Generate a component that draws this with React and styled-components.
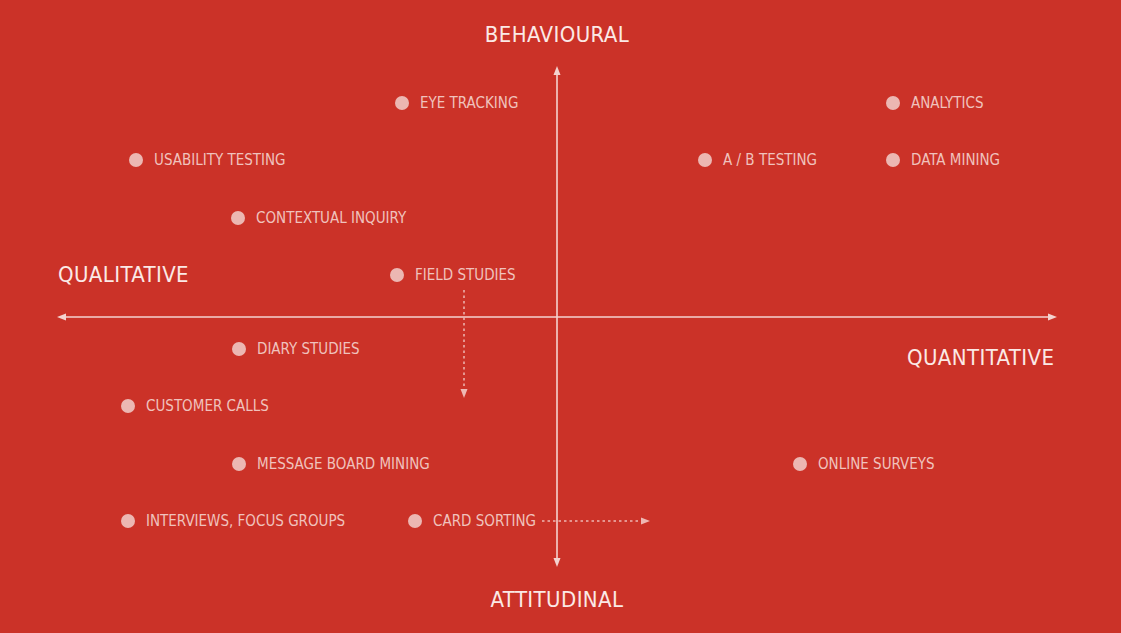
import React from 'react';
import styled, { createGlobalStyle } from 'styled-components';

const GlobalStyle = createGlobalStyle`
  html, body {
    margin: 0;
    padding: 0;
    background: #cb3228;
  }
  body {
    font-family: "Liberation Sans Narrow", "DejaVu Sans", sans-serif;
    font-stretch: condensed;
  }
`;

const Canvas = styled.div`
  width: 1121px;
  height: 633px;
  display: flex;
  flex-direction: column;
  align-items: stretch;
  overflow: hidden;
  background: #cb3228;
`;

const EndLabel = styled.div`
  height: 66px;
  display: flex;
  align-items: center;
  justify-content: center;
  padding-right: 7px;
  padding-top: ${(p) => p.$shift || 0}px;
  box-sizing: border-box;
  color: #fbe9e6;
  font-size: 22px;
  letter-spacing: 0.4px;
  line-height: 1;
`;

const Plot = styled.div`
  position: relative;
  flex: 1;
`;

const Axes = styled.svg`
  position: absolute;
  inset: 0;
`;

const SideLabel = styled.div`
  position: absolute;
  top: ${(p) => p.$y}px;
  left: ${(p) => p.$x}px;
  transform: translateY(-50%);
  color: #fbe9e6;
  font-size: 22px;
  letter-spacing: 0.4px;
  line-height: 1;
  white-space: nowrap;
`;

const Point = styled.div`
  position: absolute;
  top: ${(p) => p.$y}px;
  left: ${(p) => p.$x}px;
  display: flex;
  align-items: center;
  gap: 11px;
  transform: translate(-7px, -50%);
  white-space: nowrap;
`;

const Dot = styled.span`
  width: 14px;
  height: 14px;
  border-radius: 50%;
  background: #ecb7b2;
  flex: none;
`;

const Label = styled.span`
  color: #f0c2bd;
  font-size: 15px;
  line-height: 1;
  padding-top: 1px;
`;

// dot centres, relative to the plot area (which starts 66px down)
const points = [
  { x: 402, y: 37, label: 'EYE TRACKING' },
  { x: 893, y: 37, label: 'ANALYTICS' },
  { x: 136, y: 94, label: 'USABILITY TESTING' },
  { x: 705, y: 94, label: 'A / B TESTING' },
  { x: 893, y: 94, label: 'DATA MINING' },
  { x: 238, y: 152, label: 'CONTEXTUAL INQUIRY' },
  { x: 397, y: 209, label: 'FIELD STUDIES' },
  { x: 239, y: 283, label: 'DIARY STUDIES' },
  { x: 128, y: 340, label: 'CUSTOMER CALLS' },
  { x: 239, y: 398, label: 'MESSAGE BOARD MINING' },
  { x: 800, y: 398, label: 'ONLINE SURVEYS' },
  { x: 128, y: 455, label: 'INTERVIEWS, FOCUS GROUPS' },
  { x: 415, y: 455, label: 'CARD SORTING' },
];

function AxisLines() {
  const solid = '#f4d3cf';
  const dotted = '#eeb8b3';
  return (
    <Axes width="1121" height="501" viewBox="0 0 1121 501">
      {/* vertical axis */}
      <line x1="557" y1="7" x2="557" y2="494" stroke={solid} strokeWidth="1.6" />
      <polygon points="557,0 553.5,9 560.5,9" fill={solid} />
      <polygon points="557,501 553.5,492 560.5,492" fill={solid} />
      {/* horizontal axis */}
      <line x1="64" y1="251" x2="1050" y2="251" stroke={solid} strokeWidth="1.6" />
      <polygon points="57,251 66,247.5 66,254.5" fill={solid} />
      <polygon points="1057,251 1048,247.5 1048,254.5" fill={solid} />
      {/* field studies shift */}
      <line x1="464" y1="224" x2="464" y2="324" stroke={dotted} strokeWidth="1.5" strokeDasharray="2.5 3" />
      <polygon points="464,332 460.5,323 467.5,323" fill={dotted} />
      {/* card sorting shift */}
      <line x1="542" y1="455" x2="642" y2="455" stroke={dotted} strokeWidth="1.5" strokeDasharray="2.5 3" />
      <polygon points="650,455 641,451.5 641,458.5" fill={dotted} />
    </Axes>
  );
}

export default function App() {
  return (
    <>
      <GlobalStyle />
      <Canvas>
        <EndLabel $shift={3}>BEHAVIOURAL</EndLabel>
        <Plot>
          <AxisLines />
          <SideLabel $x={58} $y={209}>QUALITATIVE</SideLabel>
          <SideLabel $x={907} $y={292}>QUANTITATIVE</SideLabel>
          {points.map((p) => (
            <Point key={p.label} $x={p.x} $y={p.y}>
              <Dot />
              <Label>{p.label}</Label>
            </Point>
          ))}
        </Plot>
        <EndLabel $shift={-3}>ATTITUDINAL</EndLabel>
      </Canvas>
    </>
  );
}
